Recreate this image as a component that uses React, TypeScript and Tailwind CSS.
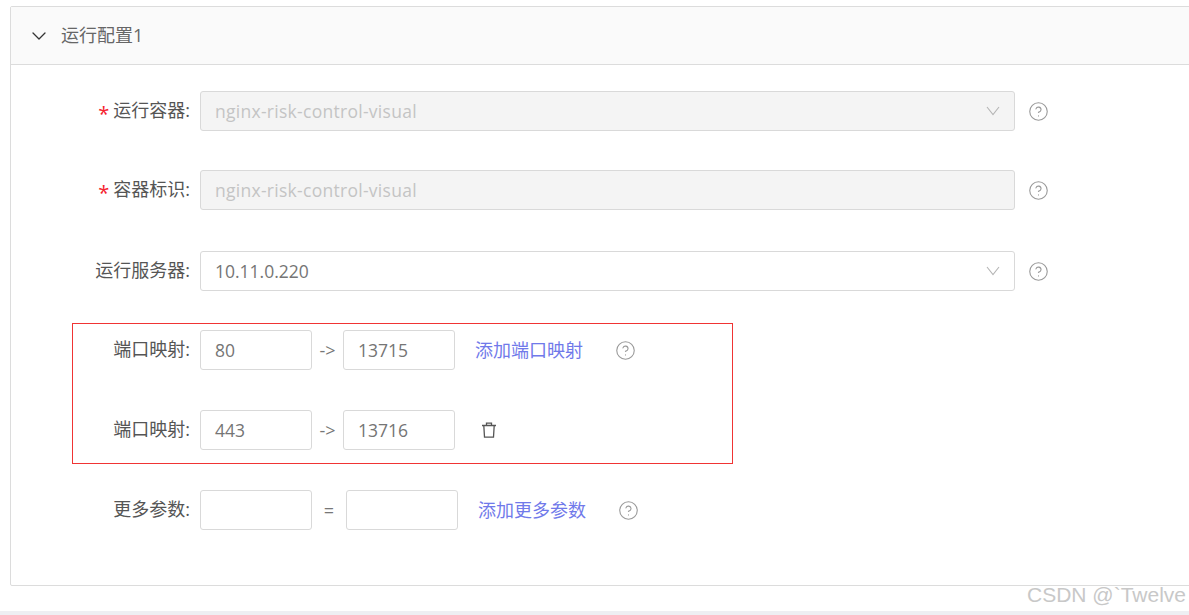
import { ChevronDown, CircleHelp } from "lucide-react";
import type { ReactNode } from "react";

function Help() {
  return <CircleHelp size={21} strokeWidth={1.25} className="text-[#999]" />;
}

function Label({ text, required }: { text: string; required?: boolean }) {
  return (
    <div className="w-[180px] shrink-0 pr-[10px] flex justify-end items-center text-[18px] text-[#555] whitespace-nowrap">
      {required && <span className="text-[#f5222d] mr-[4px] text-[20px] leading-none mt-[5px]">*</span>}
      <span className="-mt-[2px]">{text}:</span>
    </div>
  );
}

function Field({ value, disabled, wide }: { value?: string; disabled?: boolean; wide?: boolean }) {
  return (
    <div
      className={`h-10 border border-[#d9d9d9] rounded-[3px] px-[14px] flex items-center ${
        disabled ? "bg-[#f4f4f4] text-[#c4c4c4] tracking-[0.28px]" : "bg-white text-[#757575]"
      } ${wide ? "w-[815px]" : "w-[112px]"}`}
    >
      {value}
    </div>
  );
}

function Select({ value, disabled }: { value: string; disabled?: boolean }) {
  return (
    <div
      className={`h-10 w-[815px] border border-[#d9d9d9] rounded-[3px] pl-[14px] pr-[14px] flex items-center justify-between ${
        disabled ? "bg-[#f4f4f4] text-[#c4c4c4] tracking-[0.28px]" : "bg-white text-[#757575]"
      }`}
    >
      <span>{value}</span>
      <svg width="14" height="10" viewBox="0 0 14 10" fill="none" stroke="#b5b5b5" strokeWidth="1.1">
        <path d="M1 1l6 7.5L13 1" />
      </svg>
    </div>
  );
}

function Row({ children, className }: { children: ReactNode; className?: string }) {
  return <div className={`flex items-center h-10 ${className ?? ""}`}>{children}</div>;
}

function PortMap({ from, to, className, children }: { from?: string; to?: string; className: string; children: ReactNode }) {
  return (
    <Row className={className}>
      <Label text="端口映射" />
      <Field value={from} />
      <span className="w-[31px] text-center text-[#777] text-[18px]">-&gt;</span>
      <Field value={to} />
      {children}
    </Row>
  );
}

export default function App() {
  return (
    <div
      className="relative h-[615px] overflow-hidden bg-white text-[17.5px] flex flex-col"
      style={{ fontFamily: '"Open Sans", "Noto Sans CJK SC", sans-serif' }}
    >
      <div className="ml-[10px] mt-[6px] w-[1190px] h-[580px] border border-[#dcdcdc] rounded-[2px] shrink-0">
        {/* Panel header */}
        <div className="h-[58px] bg-[#fafafa] border-b border-[#dcdcdc] flex items-center pl-[16px] text-[18px] text-[#666]">
          <ChevronDown size={24} strokeWidth={1.3} className="text-[#333] mr-[10px]" />
          <span className="-mt-[1px]">运行配置1</span>
        </div>

        <div className="pl-[9px]">
          <Row className="mt-[26px]">
            <Label text="运行容器" required />
            <Select value="nginx-risk-control-visual" disabled />
            <span className="ml-[13px]"><Help /></span>
          </Row>
          <Row className="mt-[39px]">
            <Label text="容器标识" required />
            <Field value="nginx-risk-control-visual" disabled wide />
            <span className="ml-[13px]"><Help /></span>
          </Row>
          <Row className="mt-[41px]">
            <Label text="运行服务器" />
            <Select value="10.11.0.220" />
            <span className="ml-[13px]"><Help /></span>
          </Row>
          <PortMap from="80" to="13715" className="mt-[39px]">
            <span className="ml-5 text-[18px] text-[#7079ea] whitespace-nowrap">添加端口映射</span>
            <span className="ml-[32px]"><Help /></span>
          </PortMap>
          <PortMap from="443" to="13716" className="mt-10">
            <svg width="18" height="18" viewBox="0 0 18 18" fill="none" stroke="#555" strokeWidth="1.3" className="ml-[25px]">
              <path d="M2 4.5h14M6.5 4.5V2.2h5v2.3M3.8 4.5l.7 11.6h9l.7-11.6" />
            </svg>
          </PortMap>
          <Row className="mt-10">
            <Label text="更多参数" />
            <Field />
            <span className="w-[34px] text-center text-[#777] text-[18px]">=</span>
            <Field />
            <span className="ml-5 text-[18px] text-[#7079ea] whitespace-nowrap">添加更多参数</span>
            <span className="ml-[32px]"><Help /></span>
          </Row>
        </div>
      </div>

      <div className="flex-1" />
      <div className="h-1 bg-[#eeeff3] shrink-0" />

      {/* Red annotation box */}
      <div className="absolute left-[72px] top-[323px] w-[661px] h-[141px] border border-[#f03434] pointer-events-none" />
      {/* Watermark */}
      <div
        className="absolute right-[3px] top-[581px] text-[21px] leading-7 text-[#c8c8c8] whitespace-nowrap"
        style={{ fontFamily: '"Liberation Sans", sans-serif' }}
      >
        CSDN @`Twelve
      </div>
    </div>
  );
}
